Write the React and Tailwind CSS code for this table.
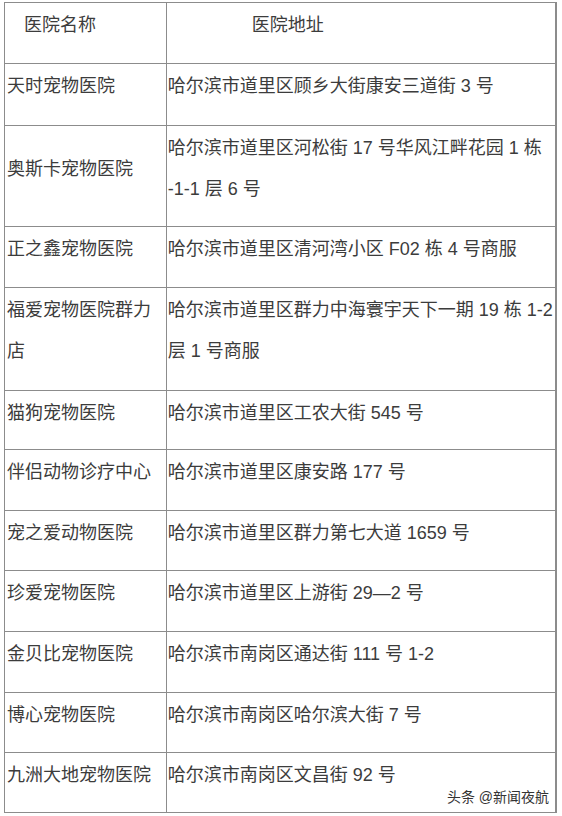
import React from "react";

const rows = [
  { h: "h-[62px]", name: ["天时宠物医院"], addr: ["哈尔滨市道里区顾乡大街康安三道街 3 号"] },
  { h: "h-[101px]", name: ["奥斯卡宠物医院"], addr: ["哈尔滨市道里区河松街 17 号华风江畔花园 1 栋", "-1-1 层 6 号"], center: true },
  { h: "h-[61px]", name: ["正之鑫宠物医院"], addr: ["哈尔滨市道里区清河湾小区 F02 栋 4 号商服"] },
  { h: "h-[103px]", name: ["福爱宠物医院群力", "店"], addr: ["哈尔滨市道里区群力中海寰宇天下一期 19 栋 1-2", "层 1 号商服"] },
  { h: "h-[59px]", name: ["猫狗宠物医院"], addr: ["哈尔滨市道里区工农大街 545 号"] },
  { h: "h-[61px]", name: ["伴侣动物诊疗中心"], addr: ["哈尔滨市道里区康安路 177 号"] },
  { h: "h-[60px]", name: ["宠之爱动物医院"], addr: ["哈尔滨市道里区群力第七大道 1659 号"] },
  { h: "h-[61px]", name: ["珍爱宠物医院"], addr: ["哈尔滨市道里区上游街 29—2 号"] },
  { h: "h-[61px]", name: ["金贝比宠物医院"], addr: ["哈尔滨市南岗区通达街 111 号 1-2"] },
  { h: "h-[60px]", name: ["博心宠物医院"], addr: ["哈尔滨市南岗区哈尔滨大街 7 号"] },
  { h: "h-[60px]", name: ["九洲大地宠物医院"], addr: ["哈尔滨市南岗区文昌街 92 号"] },
];

function Lines({ lines }) {
  return lines.map((l, i) => (
    <div key={i} className="whitespace-nowrap">
      {l}
    </div>
  ));
}

export default function App() {
  return (
    <div
      className="w-[562px] h-[816px] bg-white pl-[4px] pt-[2px] text-[18px] leading-[41px] text-[#3c3c3c]"
      style={{ fontFamily: '"Liberation Sans", "Noto Sans CJK SC", sans-serif' }}
    >
      <div className="relative w-[553px] border-l border-t border-[#8c8c8c]">
        <div className="flex h-[61px]">
          <div className="w-[162px] border-r border-b border-[#8c8c8c] pt-[2px] pl-[19px]">医院名称</div>
          <div className="w-[391px] border-r-2 border-b border-[#8c8c8c] pt-[2px] pl-[85px]">医院地址</div>
        </div>
        {rows.map((r, i) => (
          <div key={i} className={`flex ${r.h}`}>
            <div className={`w-[162px] border-r border-b border-[#8c8c8c] pl-[2px] ${r.center ? "flex flex-col justify-center pb-[14px]" : "pt-[2px]"}`}>
              <Lines lines={r.name} />
            </div>
            <div className="w-[391px] border-r-2 border-b border-[#8c8c8c] pt-[2px] pl-[1px]">
              <Lines lines={r.addr} />
            </div>
          </div>
        ))}
        <div className="absolute right-[8px] bottom-[7px] text-[14px] leading-[17px] text-[#333] whitespace-nowrap">
          头条 @新闻夜航
        </div>
      </div>
    </div>
  );
}
